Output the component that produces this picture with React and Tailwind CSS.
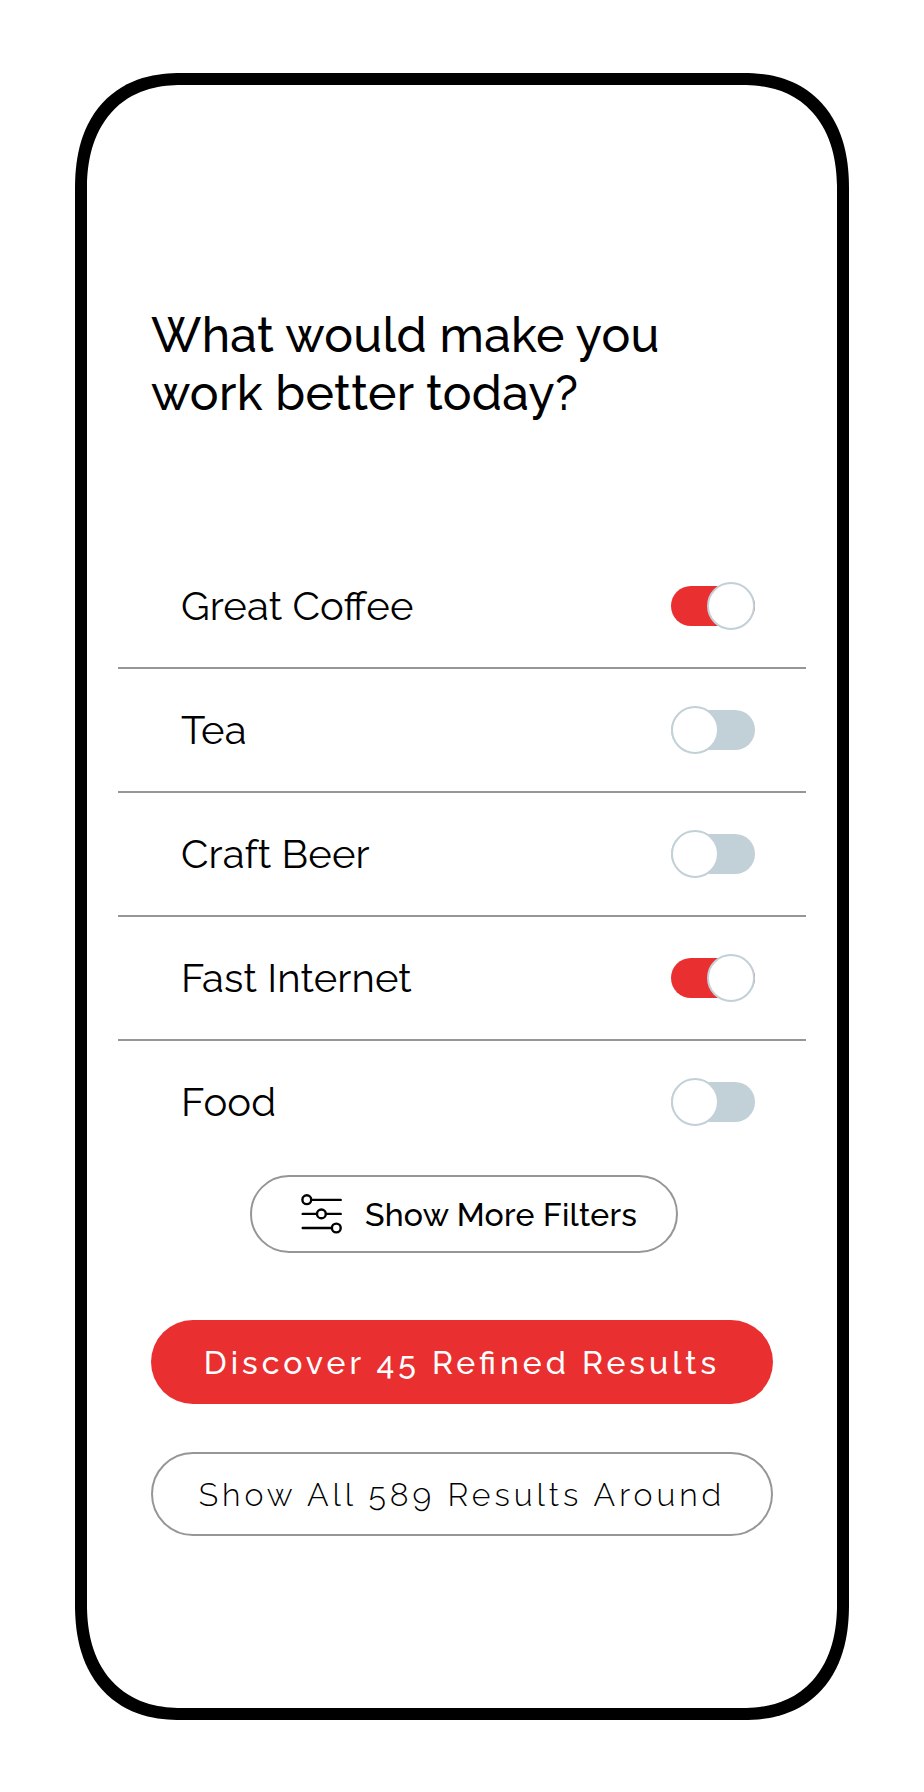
import React, { useState } from "react";

const initialFilters = [
  { label: "Great Coffee", on: true },
  { label: "Tea", on: false },
  { label: "Craft Beer", on: false },
  { label: "Fast Internet", on: true },
  { label: "Food", on: false },
];

function Toggle({ on, label, onClick }) {
  return (
    <button
      role="switch"
      aria-checked={on}
      aria-label={label}
      onClick={onClick}
      className={`flex h-10 w-21 items-center rounded-full ${
        on ? "justify-end bg-[#ea2f30]" : "justify-start bg-[#c2d0d8]"
      }`}
    >
      <span className="size-12 shrink-0 rounded-full border-2 border-[#c2d0d8] bg-white" />
    </button>
  );
}

function SlidersIcon() {
  return (
    <svg
      width="42"
      height="42"
      viewBox="0 0 42 42"
      fill="none"
      stroke="black"
      strokeWidth="2.4"
      strokeLinecap="round"
    >
      <circle cx="5.8" cy="6.7" r="4.4" />
      <path d="M10.5 6.9H39.7" />
      <path d="M1.7 20.9H15.5M25 20.9H39.7" />
      <circle cx="20.4" cy="20.9" r="4.4" />
      <path d="M1.7 35H30.5" />
      <circle cx="35.3" cy="35" r="4.4" />
    </svg>
  );
}

export default function App() {
  const [filters, setFilters] = useState(initialFilters);
  const flip = (index) =>
    setFilters(filters.map((f, i) => (i === index ? { ...f, on: !f.on } : f)));

  return (
    <main className="flex h-[1792px] w-[924px] justify-center bg-white pt-[73px] font-['Raleway','Lato',sans-serif] text-black">
      <section className="flex h-[1647px] w-[774px] flex-col rounded-[106px/116px] border-[12px] border-black [corner-shape:superellipse(1.21)]">
        <h1 className="mt-[221px] ml-16 w-[560px] text-[48px] leading-[58px] font-medium tracking-[0.32px]">
          What would make you
          <br />
          work better today?
        </h1>

        <ul className="mx-[31px] mt-[123px]">
          {filters.map((filter, i) => (
            <li
              key={filter.label}
              className="flex h-31 items-center justify-between border-b-2 border-[#969696] pr-[51px] pl-[63px] last:border-transparent"
            >
              <span className="text-[40px] leading-[48px] tracking-[0.12px] [font-feature-settings:'liga']">
                {filter.label}
              </span>
              <Toggle on={filter.on} label={filter.label} onClick={() => flip(i)} />
            </li>
          ))}
        </ul>

        <button className="mt-[10px] ml-[163px] flex h-[78px] w-[428px] items-center rounded-full border-2 border-[#969696] pl-[49px]">
          <SlidersIcon />
          <span className="ml-[22px] pt-0.5 text-[32px] leading-10 font-medium tracking-[0.25px]">
            Show More Filters
          </span>
        </button>

        <div className="mx-16 mt-[67px] flex flex-col gap-12 text-[32px] leading-10 tracking-[4px]">
          <button className="h-21 rounded-full bg-[#ea2f30] pt-0.5 font-medium text-white [font-feature-settings:'liga']">
            Discover 45 Refined Results
          </button>
          <button className="h-21 rounded-full border-2 border-[#969696] pt-0.5 font-light">
            Show All 589 Results Around
          </button>
        </div>
      </section>
    </main>
  );
}
